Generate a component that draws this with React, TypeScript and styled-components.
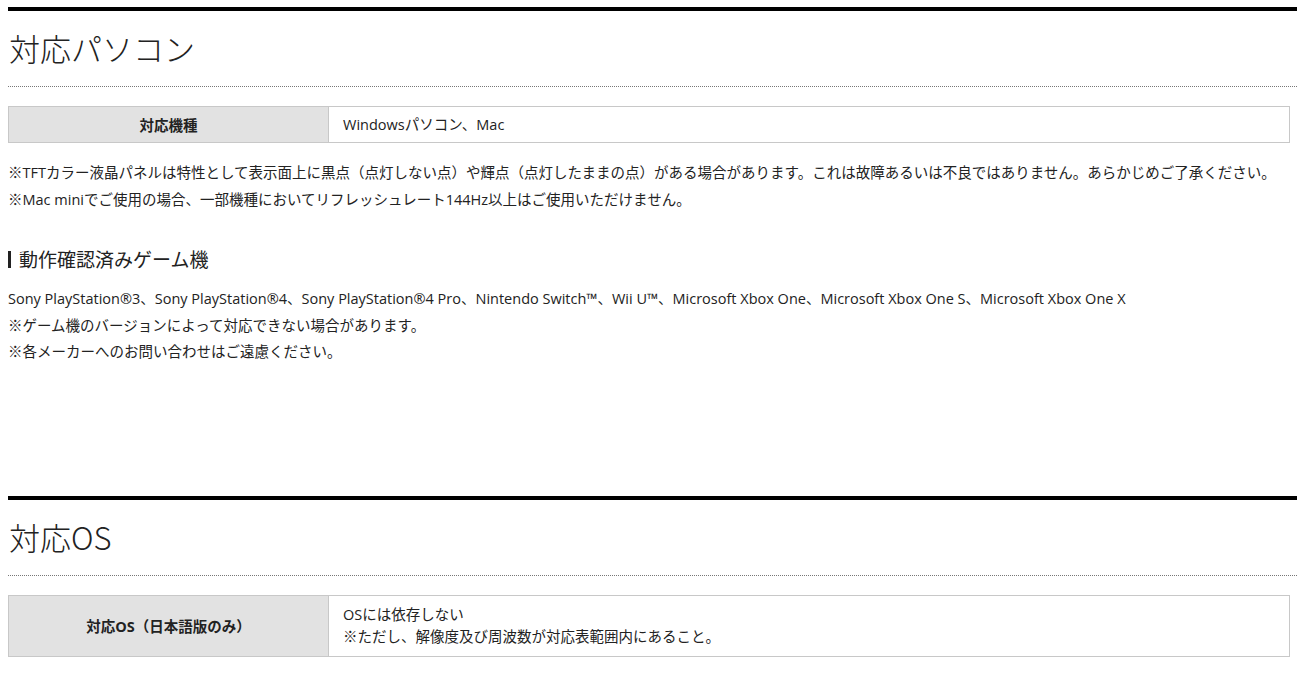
import React from "react";
import styled, { createGlobalStyle } from "styled-components";

const Global = createGlobalStyle`
  html, body { margin: 0; padding: 0; background: #fff; overflow: hidden; }
  body { padding: 7px 0 0 8px; font-family: "Open Sans", "Noto Sans CJK JP", sans-serif; color: #222; }
`;

const Section = styled.section<{ gap?: number }>`
  width: 1289px;
  border-top: 4px solid #000;
  margin-bottom: ${(p) => p.gap ?? 0}px;
`;
const H2 = styled.h2`
  margin: 0;
  padding: 17px 0 18px 1px;
  font-family: "Noto Sans CJK JP", sans-serif;
  font-size: 31px;
  font-weight: 300;
  line-height: 40px;
  border-bottom: 1px dotted #777;
`;
const Table = styled.div`
  margin-top: 19px;
  width: 1280px;
  display: grid;
  grid-template-columns: 320px 1fr;
  border: 1px solid #c8c8c8;
  font-size: 14.5px;
`;
const Th = styled.div`
  background: #e2e2e2;
  border-right: 1px solid #c8c8c8;
  font-weight: 700;
  display: flex;
  align-items: center;
  justify-content: center;
`;
const Td = styled.div<{ tall?: boolean }>`
  padding: ${(p) => (p.tall ? "8px 14px" : "6px 14px")};
  line-height: ${(p) => (p.tall ? "22px" : "23px")};
`;
const Notes = styled.div`
  margin-top: 16px;
  font-size: 14.5px;
  line-height: 27px;
  width: 1285px;
`;
const H3 = styled.h3`
  margin: 33px 0 14px;
  font-family: "Noto Sans CJK JP", sans-serif;
  font-size: 19px;
  font-weight: 400;
  line-height: 26px;
  display: flex;
  align-items: center;
  gap: 8px;
  &::before { content: ""; width: 3px; height: 17px; background: #222; }
`;
const Body = styled.div`
  font-size: 14.5px;
  line-height: 26.5px;
`;

export default function App() {
  return (
    <>
      <Global />
      <Section gap={130}>
        <H2>対応パソコン</H2>
        <Table>
          <Th>対応機種</Th>
          <Td>Windowsパソコン、Mac</Td>
        </Table>
        <Notes>
          ※TFTカラー液晶パネルは特性として表示面上に黒点（点灯しない点）や輝点（点灯したままの点）がある場合があります。これは故障あるいは不良ではありません。あらかじめご了承ください。
          <br />
          ※Mac miniでご使用の場合、一部機種においてリフレッシュレート144Hz以上はご使用いただけません。
        </Notes>
        <H3>動作確認済みゲーム機</H3>
        <Body>
          Sony PlayStation®3、Sony PlayStation®4、Sony PlayStation®4 Pro、Nintendo Switch™、Wii U™、Microsoft Xbox One、Microsoft Xbox One S、Microsoft Xbox One X
          <br />
          ※ゲーム機のバージョンによって対応できない場合があります。
          <br />
          ※各メーカーへのお問い合わせはご遠慮ください。
        </Body>
      </Section>
      <Section>
        <H2>対応OS</H2>
        <Table>
          <Th>対応OS（日本語版のみ）</Th>
          <Td tall>
            OSには依存しない
            <br />
            ※ただし、解像度及び周波数が対応表範囲内にあること。
          </Td>
        </Table>
      </Section>
    </>
  );
}
